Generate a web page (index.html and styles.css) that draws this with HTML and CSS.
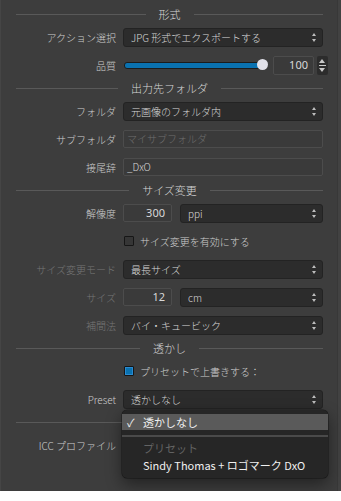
FILE: index.html
```html
<!DOCTYPE html>
<html lang="ja">
<head>
<meta charset="utf-8">
<link rel="stylesheet" href="styles.css">
</head>
<body>
<div class="page">
  <div class="panel">
    <div class="hdr"><span class="ln"></span><span class="ht">形式</span><span class="ln"></span></div>
    <div class="row"><div class="lbl">アクション選択</div><div class="ctl"><div class="sel">JPG 形式でエクスポートする<span class="arr"></span></div></div></div>
    <div class="row"><div class="lbl">品質</div><div class="ctl slidewrap">
      <div class="slider"><div class="track"></div><div class="thumb"></div></div>
      <div class="num wnum">100</div>
      <div class="stepper"><span class="up"></span><span class="dn"></span></div>
    </div></div>
    <div class="hdr"><span class="ln"></span><span class="ht">出力先フォルダ</span><span class="ln"></span></div>
    <div class="row"><div class="lbl">フォルダ</div><div class="ctl"><div class="sel">元画像のフォルダ内<span class="arr"></span></div></div></div>
    <div class="row"><div class="lbl">サブフォルダ</div><div class="ctl"><div class="inp ph">マイサブフォルダ</div></div></div>
    <div class="row"><div class="lbl">接尾辞</div><div class="ctl"><div class="inp">_DxO</div></div></div>
    <div class="hdr"><span class="ln"></span><span class="ht">サイズ変更</span><span class="ln"></span></div>
    <div class="row"><div class="lbl">解像度</div><div class="ctl pair"><div class="num">300</div><div class="sel">ppi<span class="arr"></span></div></div></div>
    <div class="row"><div class="lbl"></div><div class="ctl"><label class="chk"><span class="box"></span>サイズ変更を有効にする</label></div></div>
    <div class="row"><div class="lbl dis">サイズ変更モード</div><div class="ctl"><div class="sel">最長サイズ<span class="arr"></span></div></div></div>
    <div class="row"><div class="lbl dis">サイズ</div><div class="ctl pair"><div class="num">12</div><div class="sel">cm<span class="arr"></span></div></div></div>
    <div class="row"><div class="lbl dis">補間法</div><div class="ctl"><div class="sel">バイ・キュービック<span class="arr"></span></div></div></div>
    <div class="hdr"><span class="ln"></span><span class="ht">透かし</span><span class="ln"></span></div>
    <div class="row"><div class="lbl"></div><div class="ctl"><label class="chk"><span class="box on"></span>プリセットで上書きする：</label></div></div>
    <div class="row"><div class="lbl">Preset</div><div class="ctl"><div class="sel">透かしなし<span class="arr"></span></div></div></div>
    <div class="hdr"><span class="ln"></span><span class="ht"></span><span class="ln"></span></div>
    <div class="row"><div class="lbl">ICC プロファイル</div><div class="ctl"></div></div>

    <div class="menu">
      <div class="mi hi"><span class="ck">✓</span>透かしなし</div>
      <div class="msep"></div>
      <div class="mi mdis">プリセット</div>
      <div class="mi">Sindy Thomas + ロゴマーク DxO</div>
    </div>
  </div>
  <div class="strip"></div>
</div>
</body>
</html>
```

FILE: styles.css
```css
html, body {
  margin: 0;
  padding: 0;
  background: #ffffff;
}
body {
  font-family: "Noto Sans CJK JP", "Noto Sans", "Liberation Sans", sans-serif;
  font-size: 10px;
  font-weight: 300;
  color: #d0d0d0;
}
.page {
  display: flex;
  width: 341px;
  height: 491px;
}
.panel {
  position: relative;
  width: 337px;
  height: 491px;
  background: #3d3d3d;
  box-sizing: border-box;
  padding: 5px 14px 0 15px;
  display: flex;
  flex-direction: column;
  border-left: 1px solid #454545;
}
.strip {
  width: 4px;
  height: 491px;
  background: #424242;
  border-left: 1px solid #383838;
  box-sizing: border-box;
}
.hdr {
  height: 18px;
  display: flex;
  align-items: center;
  gap: 13px;
}
.hdr .ln {
  flex: 1;
  height: 1px;
  background: #595959;
}
.hdr .ht {
  font-size: 11px;
  color: #d6d6d6;
  line-height: 1;
}
.row {
  height: 28px;
  display: flex;
  align-items: center;
}
.lbl {
  width: 100px;
  text-align: right;
  white-space: nowrap;
  color: #cdcdcd;
  flex: none;
}
.lbl.dis {
  color: #767676;
}
.ctl {
  margin-left: 7px;
  flex: 1;
  display: flex;
  align-items: center;
}
.sel {
  position: relative;
  flex: 1;
  height: 19px;
  box-sizing: border-box;
  background: #2c2c2c;
  border: 1px solid #232323;
  border-radius: 3px;
  padding-left: 7px;
  line-height: 17px;
  color: #d8d8d8;
  white-space: nowrap;
}
.arr {
  position: absolute;
  right: 5px;
  top: 4px;
  width: 5px;
  height: 9px;
}
.arr::before, .arr::after {
  content: "";
  position: absolute;
  left: 0;
  border-left: 2.5px solid transparent;
  border-right: 2.5px solid transparent;
}
.arr::before {
  top: 0;
  border-bottom: 3.5px solid #bdbdbd;
}
.arr::after {
  bottom: 0;
  border-top: 3.5px solid #bdbdbd;
}
.inp {
  flex: 1;
  height: 18px;
  box-sizing: border-box;
  background: #3a3a3a;
  border: 1px solid #4c4c4c;
  border-radius: 2px;
  padding-left: 3px;
  line-height: 16px;
  color: #d8d8d8;
}
.inp.ph {
  color: #6e6e6e;
}
.pair {
  gap: 8px;
}
.num {
  width: 49px;
  height: 18px;
  box-sizing: border-box;
  background: #3a3a3a;
  border: 1px solid #4c4c4c;
  border-radius: 2px;
  text-align: right;
  padding-right: 6px;
  line-height: 16px;
  color: #d8d8d8;
  font-family: "Noto Sans", "Liberation Sans", sans-serif;
  font-size: 11px;
  font-weight: 400;
  flex: none;
}
.slidewrap {
  gap: 0;
}
.slider {
  position: relative;
  width: 145px;
  height: 12px;
  flex: none;
}
.track {
  position: absolute;
  left: 1px;
  right: 5px;
  top: 3px;
  height: 5px;
  background: #0a72b0;
  border: 1px solid #1c1c1c;
  border-radius: 3px;
}
.thumb {
  position: absolute;
  right: 0;
  top: 0;
  width: 11px;
  height: 11px;
  border-radius: 50%;
  background: #e2e2ea;
}
.wnum {
  width: 41px;
  height: 19px;
  margin-left: 5px;
  padding-right: 5px;
}
.stepper {
  position: relative;
  width: 11px;
  height: 19px;
  margin-left: 3px;
  background: #2c2c2c;
  border-radius: 2px;
  flex: none;
}
.stepper .up, .stepper .dn {
  position: absolute;
  left: 2px;
  border-left: 3.5px solid transparent;
  border-right: 3.5px solid transparent;
}
.stepper .up {
  top: 3px;
  border-bottom: 4px solid #c8c8c8;
}
.stepper .dn {
  bottom: 3px;
  border-top: 4px solid #c8c8c8;
}
.stepper::after {
  content: "";
  position: absolute;
  left: 2px;
  right: 2px;
  top: 9px;
  height: 1px;
  background: #c8c8c8;
}
.chk {
  display: flex;
  align-items: center;
  gap: 6px;
  margin-left: 1px;
  color: #cdcdcd;
}
.box {
  width: 10px;
  height: 10px;
  box-sizing: border-box;
  border: 1px solid #161616;
  background: #363636;
  border-radius: 1px;
}
.box.on {
  background: #0a72b0;
  box-shadow: inset 0 0 0 1px #2a8ad0;
}
.menu {
  position: absolute;
  left: 121px;
  top: 410px;
  width: 206px;
  height: 68px;
  box-sizing: border-box;
  background: #262626;
  border-radius: 5px;
  padding-top: 4px;
  box-shadow: 0 6px 16px rgba(0,0,0,0.45), 0 0 0 0.5px rgba(0,0,0,0.5);
  font-family: "Noto Sans CJK JP", "Noto Sans", sans-serif;
  font-size: 11px;
  font-weight: 400;
  color: #f0f0f0;
}
.mi {
  height: 16px;
  line-height: 16px;
  padding-left: 21px;
  position: relative;
  white-space: nowrap;
}
.mi.hi {
  background: #5a5a5a;
}
.ck {
  position: absolute;
  left: 5px;
  top: 0;
}
.msep {
  height: 2px;
  background: #4a4a4a;
  margin: 5px 0 3px;
}
.mi.mdis {
  color: #636363;
  margin-bottom: 1px;
}
```
